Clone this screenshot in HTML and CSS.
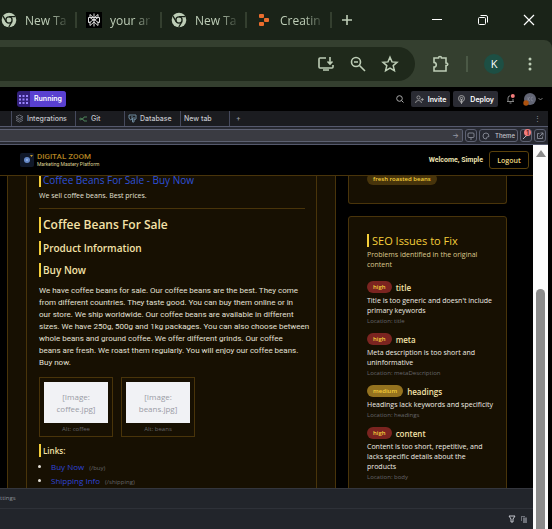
FILE: index.html
```html
<!DOCTYPE html>
<html lang="en">
<head>
<meta charset="utf-8">
<title>Digital Zoom</title>
<link rel="stylesheet" href="styles.css">
</head>
<body>
<svg class="defs" width="0" height="0" aria-hidden="true">
  <symbol id="chrome" viewBox="0 0 16 16"><circle cx="8" cy="8" r="7.3" fill="#bdcdb6"/><circle cx="8" cy="8" r="3.1" fill="#bdcdb6" stroke="#1a2318" stroke-width="1.3"/><path d="M8 4.7h6.4M5.2 9.7L2 4.2M10.9 9.7L7.8 15" stroke="#1a2318" stroke-width="1.3"/></symbol>
</svg>
<header class="browser">
  <nav class="tabs" aria-label="Browser tabs">
    <a class="tab" href="#"><svg width="16" height="16"><use href="#chrome"/></svg><span>New Ta</span></a>
    <a class="tab" href="#"><svg class="dark" width="16" height="16" viewBox="0 0 16 16" fill="none" stroke="#dcdcdc" stroke-width="1"><path d="M8 1.500v13M4 2.500v3l4 3 4-3v-3L8 6 4 2.500M2.500 5.500h11v5H12L8 7l-4 3.500H2.500zM4 9.500v4l4-3.500 4 3.500v-4"/></svg><span>your ar</span></a>
    <a class="tab" href="#"><svg width="16" height="16"><use href="#chrome"/></svg><span>New Ta</span></a>
    <a class="tab" href="#"><svg width="16" height="16" viewBox="0 0 16 16" fill="#ea6d2d"><rect x="3" y="2" width="5" height="4" rx="1"/><rect x="8" y="6" width="5" height="4" rx="1"/><rect x="3" y="10" width="5" height="4" rx="1"/></svg><span>Creatin</span></a>
    <button class="plain add" aria-label="New tab"><svg width="12" height="12" viewBox="0 0 12 12" stroke="#bdcdb6" stroke-width="1.6"><path d="M6 1v10M1 6h10"/></svg></button>
    <div class="window-buttons">
      <button class="plain" aria-label="Minimize"><svg width="12" height="12" viewBox="0 0 12 12" stroke="#fff"><path d="M1 5.500h10"/></svg></button>
      <button class="plain" aria-label="Restore"><svg width="12" height="12" viewBox="0 0 12 12" fill="none" stroke="#fff"><rect x="1.500" y="3.500" width="7" height="7" rx="1"/><path d="M3.500 1.500H9q1.500 0 1.500 1.500v5.500"/></svg></button>
      <button class="plain" aria-label="Close"><svg width="12" height="12" viewBox="0 0 12 12" stroke="#fff" stroke-width="1.200"><path d="M1 1l10 10M11 1L1 11"/></svg></button>
    </div>
  </nav>
  <div class="toolbar">
    <div class="omnibox">
      <button class="plain" aria-label="Install app"><svg width="18" height="18" viewBox="0 0 18 18" fill="none" stroke="#bdcdb6" stroke-width="1.600"><path d="M9 3H3q-1 0-1 1v8q0 1 1 1h12q1 0 1-1v-2M13 2v7M10.500 6.500L13 9l2.500-2.500M6 15h6"/></svg></button>
      <button class="plain" aria-label="Zoom"><svg width="18" height="18" viewBox="0 0 18 18" fill="none" stroke="#bdcdb6" stroke-width="1.600"><circle cx="7" cy="7" r="4.500"/><path d="M10.500 10.500L16 16M5 7h4"/></svg></button>
      <button class="plain" aria-label="Bookmark"><svg width="18" height="18" viewBox="0 0 18 18" fill="none" stroke="#bdcdb6" stroke-width="1.500"><path d="M9 2.200l2 4.700 5 .4-3.800 3.300 1.200 5L9 13l-4.400 2.600 1.200-5L2 7.300l5-.4z"/></svg></button>
    </div>
    <button class="plain" aria-label="Extensions"><svg width="18" height="18" viewBox="0 0 18 18" fill="none" stroke="#bdcdb6" stroke-width="1.600"><path d="M2 3h4.500q0-1.500 1.500-1.500T9.500 3H14v5q1.800 0 1.800 1.300T14 10.600V16H2v-4q2.300 0 2.300-2.300T2 7.400z"/></svg></button>
    <span class="rule"></span>
    <button class="avatar">K</button>
    <button class="plain" aria-label="Menu"><svg width="4" height="16" viewBox="0 0 4 16" fill="#bdcdb6"><circle cx="2" cy="3" r="1.500"/><circle cx="2" cy="8" r="1.500"/><circle cx="2" cy="13" r="1.500"/></svg></button>
  </div>
</header>
<div class="workspace">
  <header class="ide-bar">
    <button class="run"><svg width="13" height="15" viewBox="0 0 13 15" fill="#9b86ff"><path d="M2 3h2v2H2zM5.500 3h2v2h-2zM9 3h2v2H9zM2 6.500h2v2H2zM5.500 6.500h2v2h-2zM9 6.500h2v2H9zM2 10h2v2H2zM5.500 10h2v2h-2zM9 10h2v2H9z"/></svg><span>Running</span></button>
    <div class="ide-actions">
      <button class="plain" aria-label="Search"><svg width="8" height="8" viewBox="0 0 8 8" fill="none" stroke="#aaa"><circle cx="3.500" cy="3.500" r="2.800"/><path d="M5.500 5.500L7.500 7.500"/></svg></button>
      <button class="chip"><svg width="9" height="9" viewBox="0 0 9 9" fill="none" stroke="#aaa" stroke-width=".8"><circle cx="3.500" cy="2.500" r="1.600"/><path d="M.5 8q0-2.500 3-2.500t3 2.500M7.300 3v3M5.800 4.500h3"/></svg>Invite</button>
      <button class="chip"><svg width="9" height="9" viewBox="0 0 9 9" fill="none" stroke="#aaa" stroke-width=".9"><circle cx="4.500" cy="3.500" r="3"/><circle cx="4.500" cy="3.500" r="1.200"/><path d="M4.500 4v5M3 7h3"/></svg>Deploy</button>
      <button class="plain bell" aria-label="Notifications"><svg width="9" height="10" viewBox="0 0 9 10" fill="none" stroke="#aaa" stroke-width=".8"><path d="M1 7.500h7M2 7V4q0-2 2.200-2.200M7 7V5M3.500 9h2"/><circle cx="6.800" cy="2" r="2" fill="#f47c7c" stroke="none"/></svg></button>
      <button class="plain user" aria-label="Account"><svg width="20" height="14" viewBox="0 0 20 14" fill="none"><circle cx="7" cy="7" r="6" fill="#626574"/><path d="M5 5v4M7 5L5 7l2 2M10 5q-2 0-2 2t2 2" stroke="#888b99" stroke-width=".7"/><circle cx="3" cy="11" r="2.700" fill="#ad520e"/><path d="M15.500 6l2 2 2-2" stroke="#999" stroke-width=".8"/></svg></button>
    </div>
  </header>
  <nav class="ide-tabs" aria-label="Workspace tabs">
    <a href="#" class="integrations"><svg width="9" height="9" viewBox="0 0 9 9" fill="none" stroke="#797c86" stroke-width=".8"><path d="M4.500 1L8 2.800 4.500 4.600 1 2.800zM1 4.500l3.500 1.800L8 4.500M1 6.300l3.500 1.800L8 6.300"/></svg>Integrations</a>
    <a href="#" class="git"><svg width="9" height="9" viewBox="0 0 9 9" fill="none" stroke="#4c8058"><path d="M2 5q3 0 3-2h3M2 5q3 0 3 2h3"/><circle cx="1.500" cy="5" r=".8"/></svg>Git</a>
    <a href="#" class="database"><svg width="9" height="9" viewBox="0 0 9 9" fill="none" stroke="#6f8b9e"><path d="M1 1h7v4L6 6V3M1 1v3l1.500 2L4 5V2M4.500 4v4H6V6"/></svg>Database</a>
    <a href="#" class="new">New tab</a>
    <button class="plain" aria-label="Add tab">+</button>
    <button class="plain more" aria-label="More">⋮</button>
  </nav>
  <div class="address">
    <div class="field"><input type="text" aria-label="Address"><span>→</span></div>
    <button class="tool" aria-label="Device"><svg width="8" height="8" viewBox="0 0 8 8" fill="none" stroke="#9699a4" stroke-width=".8"><rect x="1" y="1" width="6" height="4.500" rx="1"/><path d="M3 7h2"/></svg></button>
    <button class="tool theme"><svg width="8" height="8" viewBox="0 0 8 8" fill="none" stroke="#9699a4" stroke-width=".8"><path d="M4 1a3 3 0 1 0 0 6q1 0 .5-1.200Q4.500 5 7 4.500 7 1 4 1z"/></svg>Theme</button>
    <button class="tool tools" aria-label="Tools"><svg width="8" height="8" viewBox="0 0 8 8" fill="none" stroke="#aeb0ba"><path d="M1 7l3-3M4 4l2.500-1.500"/></svg><b>1</b></button>
    <button class="tool" aria-label="Open in new tab"><svg width="8" height="8" viewBox="0 0 8 8" fill="none" stroke="#9699a4" stroke-width=".8"><path d="M3.500 1.500h-2v5h5v-2M4.500 1H7v2.500M7 1L3.500 4.500"/></svg></button>
  </div>
  <div class="preview">
    <div class="pane">
      <header class="site">
        <svg width="14" height="14" viewBox="0 0 14 14"><rect width="14" height="14" rx="2" fill="#101829"/><circle cx="7" cy="7" r="3" fill="#6689c7"/><circle cx="7" cy="7" r="1" fill="#9bb9e5"/><path d="M10 2h3l-1.500 2z" fill="#c99a26"/></svg>
        <div class="brand"><strong>DIGITAL ZOOM</strong><span>Marketing Mastery Platform</span></div>
        <span class="welcome">Welcome, Simple</span>
        <button class="logout">Logout</button>
      </header>
      <main>
        <section class="outer">
          <article class="inner">
            <h1 class="bar result"><a href="#">Coffee Beans For Sale - Buy Now</a></h1>
            <p class="summary">We sell coffee beans. Best prices.</p>
            <h2 class="bar">Coffee Beans For Sale</h2>
            <h3 class="bar">Product Information</h3>
            <h3 class="bar">Buy Now</h3>
            <p class="copy">We have coffee beans for sale. Our coffee beans are the best. They come<br>from different countries. They taste good. You can buy them online or in<br>our store. We ship worldwide. Our coffee beans are available in different<br>sizes. We have 250g, 500g and 1kg packages. You can also choose between<br>whole beans and ground coffee. We offer different grinds. Our coffee<br>beans are fresh. We roast them regularly. You will enjoy our coffee beans.<br>Buy now.</p>
            <div class="images">
              <figure><div>[Image:<br>coffee.jpg]</div><figcaption>Alt: coffee</figcaption></figure>
              <figure><div>[Image:<br>beans.jpg]</div><figcaption>Alt: beans</figcaption></figure>
            </div>
            <h4 class="bar">Links:</h4>
            <ul>
              <li><a href="#">Buy Now</a><small>(/buy)</small></li>
              <li><a href="#">Shipping Info</a><small>(/shipping)</small></li>
            </ul>
          </article>
        </section>
        <aside>
          <section class="card keywords"><span class="keyword">fresh roasted beans</span></section>
          <section class="card issues">
            <h2 class="bar">SEO Issues to Fix</h2>
            <p class="intro">Problems identified in the original<br>content</p>
            <div class="issue"><h3><span class="high">high</span>title</h3><p>Title is too generic and doesn't include<br>primary keywords</p><small>Location: title</small></div>
            <div class="issue"><h3><span class="high">high</span>meta</h3><p>Meta description is too short and<br>uninformative</p><small>Location: metaDescription</small></div>
            <div class="issue"><h3><span class="medium">medium</span>headings</h3><p>Headings lack keywords and specificity</p><small>Location: headings</small></div>
            <div class="issue"><h3><span class="high">high</span>content</h3><p>Content is too short, repetitive, and<br>lacks specific details about the<br>products</p><small>Location: body</small></div>
          </section>
        </aside>
      </main>
      <footer>
        <div class="settings"><span>ttings</span></div>
        <div class="console">
          <button class="plain" aria-label="Filter"><svg width="8" height="8" viewBox="0 0 8 8" fill="none" stroke="#c4c7ce"><path d="M1 1h6L5 4v3H3V4z"/></svg></button>
          <button class="plain" aria-label="Copy"><svg width="8" height="8" viewBox="0 0 8 8" fill="#6d7078"><path d="M1 1h4v1H2v4H1zM3 2.500h4V8H3z"/></svg></button>
        </div>
      </footer>
    </div>
    <div class="scroll"><i class="arrow"></i><i class="thumb"></i></div>
  </div>
</div>
</body>
</html>
```
FILE: styles.css
```css
* { box-sizing: border-box; }
body { margin: 0; height: 100vh; display: flex; flex-direction: column; overflow: hidden; background: #000; color: #e4e0d6; font-family: "Open Sans", "Noto Sans", sans-serif; font-size: 7px; }
h1, h2, h3, h4, p, figure, ul { margin: 0; padding: 0; }
a { color: inherit; text-decoration: none; }
button, input { font: inherit; color: inherit; margin: 0; padding: 0; border: 0; }
svg { display: block; flex: none; }
.defs { position: absolute; }
.plain { display: flex; background: none; }

.browser { flex: none; background: #1a2318; }
.tabs { display: flex; align-items: center; height: 40px; }
.tab { display: flex; align-items: center; gap: 8px; width: 85px; height: 16px; flex: none; padding-left: 2px; border-right: 2px solid #343f2f; color: #bdcdb6; font-size: 12px; }
.tab:first-child { width: 77px; }
.tab:first-child { padding-left: 1px; }
.tab + .tab { padding-left: 9px; }
.tab span { white-space: nowrap; mask-image: linear-gradient(to right, #000 60%, rgba(0, 0, 0, 0.2)); }
.dark { background: #000; }
.add { margin-left: 9px; }
.window-buttons { display: flex; gap: 34px; margin-left: auto; padding-right: 17px; }
.toolbar { display: flex; align-items: center; height: 47px; padding-right: 20px; background: #343f2f; border-radius: 0 8px 0 0; }
.omnibox { display: flex; flex: 1; align-items: center; justify-content: flex-end; gap: 14px; height: 34px; margin-right: 17px; padding-right: 16px; border-radius: 0 17px 17px 0; background: #1f291b; }
.rule { width: 2px; height: 16px; margin: 0 16px; background: #4b5946; }
.avatar { width: 20px; height: 20px; margin-right: 24px; border-radius: 50%; background: #1d4f44; color: #fff; font-size: 11px; }

.workspace { display: flex; flex: 1; flex-direction: column; min-height: 0; margin-right: 4px; }
.ide-bar, .ide-tabs, .address { flex: none; font-family: "Inter", sans-serif; font-weight: 500; }
.ide-bar { display: flex; align-items: center; justify-content: space-between; height: 24px; padding-left: 17px; padding-right: 5px; }
.run { display: flex; overflow: hidden; height: 16px; align-items: center; border-radius: 3px; background: #32207a; color: #fff; font-weight: 600; }
.run span { padding: 0 4px; line-height: 16px; background: #5940d0; }
.ide-actions { display: flex; align-items: center; }
.chip { display: flex; align-items: center; gap: 4px; height: 16px; margin-left: 3px; padding: 0 4px; border-radius: 2px; background: #2a2b33; color: #fff; font-weight: 600; }
.ide-actions > .plain:first-child { margin-right: 4px; }
.bell { margin: 0 8px; }
.ide-tabs { display: flex; align-items: center; height: 15px; padding-left: 11px; background: #1b1c20; color: #c4c5cb; }
.ide-tabs a { display: flex; align-items: center; gap: 3px; height: 15px; padding-left: 3px; border-left: 1px solid #464a5d; }
.integrations { width: 64px; }
.git { width: 49px; }
.database { width: 56px; }
.new { width: 49px; }
.ide-tabs button { height: 15px; align-items: center; padding-left: 6px; border-left: 1px solid #464a5d; color: #9a9ca5; }
.ide-tabs .more { margin-left: auto; border: 0; padding-right: 7px; }
.address { display: flex; align-items: center; gap: 2px; height: 19px; padding-right: 2px; border-top: 1px solid #55596d; border-bottom: 1px solid #55596d; background: #272931; color: #c4c5cb; }
.field { display: flex; flex: 1; align-items: center; height: 13px; padding-right: 3px; border: 1px solid #5d6172; border-left: 0; border-radius: 0 2px 2px 0; background: #3a3b42; color: #9699a4; }
.field input { flex: 1; min-width: 0; height: 11px; background: none; }
.tool { position: relative; display: flex; align-items: center; justify-content: center; width: 12px; height: 13px; border: 1px solid #5d6172; border-radius: 3px; background: #272931; font-size: 6px; }
.theme { width: 39px; gap: 5px; }
.tools b { position: absolute; top: -1px; right: 0; width: 7px; border-radius: 4px; background: #f47c7c; color: #5e1c25; font-size: 6px; line-height: 7px; }

.preview { display: flex; flex: 1; min-height: 0; }
.pane { display: flex; flex: 1; flex-direction: column; min-width: 0; }
.scroll { display: flex; width: 15px; flex: none; flex-direction: column; align-items: center; background: #fcfcfc; }
.arrow { margin-top: 5px; border: 5px solid transparent; border-top: 0; border-bottom: 7px solid #8b8b8b; }
.thumb { flex: 1; width: 9px; margin-top: 132px; border-radius: 5px 5px 0 0; background: #8b8b8b; }
.site { display: flex; flex: none; align-items: center; height: 31px; padding: 0 4px 0 20px; border-bottom: 1px solid #49340a; }
.brand { display: flex; flex-direction: column; margin-left: 3px; font-family: Roboto, sans-serif; }
.brand strong { color: #b08020; font-size: 8px; font-weight: 500; line-height: 8px; }
.brand span { color: #ded294; font-size: 5px; line-height: 7px; }
.welcome { margin-left: auto; margin-right: 6px; color: #ece2b2; font-family: Roboto, sans-serif; font-weight: 700; }
.logout { width: 40px; height: 18px; border: 1px solid #5a410c; border-radius: 3px; background: #000; color: #f0dc82; font-weight: 600; }
main { display: grid; flex: 1; grid-template-columns: minmax(0, 329fr) minmax(0, 159fr); gap: 12px; min-height: 0; overflow: hidden; padding: 0 26px 0 7px; }
.outer { padding: 0 18px; border: 1px solid #49340a; border-width: 0 1px; background: #171002; }
.inner { min-height: 100%; padding: 0 11px 0 12px; border: 1px solid #49340a; border-width: 0 1px; }
.bar { border-left: 2px solid #f4ce3a; padding-left: 2px; color: #f4e2a8; font-weight: 600; white-space: nowrap; }
.result { margin-top: -3px; color: #2e50d8; font-size: 10px; font-weight: 500; line-height: 14px; }
.summary { height: 22px; padding-top: 3px; border-bottom: 1px solid #49340a; line-height: 12px; }
.inner h2 { margin: 8px 0; font-size: 12px; line-height: 16px; }
.inner h3 { margin-bottom: 8px; font-size: 10px; line-height: 14px; }
.copy { font-family: Roboto, sans-serif; font-size: 8px; line-height: 12px; white-space: nowrap; }
.images { display: flex; gap: 8px; margin: 8px 0 7px; }
figure { width: 74px; height: 60px; padding: 4px; border: 1px solid #49340a; text-align: center; }
figure div { height: 41px; padding-top: 9px; background: #f1f2f5; color: #9a9ca5; font-size: 8px; line-height: 12px; }
figcaption { color: #66666b; font-size: 6px; line-height: 12px; }
.inner h4 { font-size: 8px; line-height: 13px; }
ul { margin-top: 3px; padding-left: 12px; }
li { font-size: 8px; line-height: 14px; }
li a { color: #2e44d8; font-weight: 500; }
small { color: #66666b; font-size: 6px; line-height: 8px; }
li small { margin-left: 5px; }
aside { display: flex; flex-direction: column; gap: 12px; }
.card { border: 1px solid #49340a; border-radius: 3px; background: #171002; padding: 0 18px; white-space: nowrap; }
.keywords { flex: none; height: 28px; border-top: 0; border-radius: 0 0 3px 3px; }
.keyword { display: inline-block; margin-top: -3px; padding: 0 6px; border-radius: 6px; background: #47340b; color: #f4ce3a; font-size: 6px; font-weight: 600; line-height: 12px; vertical-align: top; }
.issues { flex: none; height: 400px; padding-top: 17px; }
.issues .bar { padding-left: 3px; color: #f4ce3a; font-size: 11px; line-height: 13px; font-weight: 500; }
.intro { margin: 3px 0 11px; color: #ddc98c; line-height: 10px; }
.issue { margin-bottom: 7px; }
.issue h3 { display: flex; align-items: center; gap: 4px; height: 12px; color: #f4e2a8; font-size: 8px; font-weight: 600; }
.issue h3 span { padding: 0 6px; border-radius: 6px; color: #f4ce3a; font-size: 6px; line-height: 12px; }
.high { background: #7b2420; }
.medium { background: #94721f; }
.issue p { margin-top: 3px; color: #f0ede4; line-height: 10px; }
.issue small { display: block; line-height: 10px; }
footer { flex: none; height: 41px; border-top: 1px solid #34363d; background: #22252b; color: #8d9098; font-size: 6px; }
.settings { height: 20px; border-bottom: 1px solid #2e3138; line-height: 18px; }
.console { display: flex; justify-content: flex-end; align-items: center; gap: 4px; height: 20px; padding-right: 5px; }
```
